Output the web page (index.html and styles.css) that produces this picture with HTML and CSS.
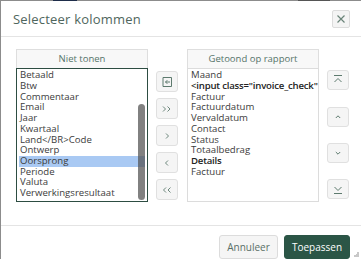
FILE: index.html
```html
<!DOCTYPE html>
<html>
<head>
<meta charset="utf-8">
<link rel="stylesheet" href="styles.css">
</head>
<body>
<div class="modal">
  <div class="header">
    <div class="title">Selecteer kolommen</div>
    <button class="close" aria-label="Sluiten">
      <svg width="10" height="10" viewBox="0 0 10 10"><path d="M1.5 1.5L8.5 8.5M8.5 1.5L1.5 8.5" stroke="#6a8479" stroke-width="1.2" fill="none"/></svg>
    </button>
  </div>
  <div class="content">
    <div class="panel">
      <div class="panel-head">Niet tonen</div>
      <div class="list focused">
        <div class="item">Betaald</div>
        <div class="item">Btw</div>
        <div class="item">Commentaar</div>
        <div class="item">Email</div>
        <div class="item">Jaar</div>
        <div class="item">Kwartaal</div>
        <div class="item">Land&lt;/BR&gt;Code</div>
        <div class="item">Ontwerp</div>
        <div class="item selected">Oorsprong</div>
        <div class="item">Periode</div>
        <div class="item">Valuta</div>
        <div class="item">Verwerkingsresultaat</div>
        <div class="thumb"></div>
      </div>
    </div>
    <div class="mid-buttons">
      <button class="btn-sq">
        <svg width="12" height="12" viewBox="0 0 12 12"><path d="M2 1.5H10.5V10.5H2Z" stroke="#5d7a6e" stroke-width="1" fill="none"/><path d="M9 6H4.5M6.3 4.2L4.5 6L6.3 7.8" stroke="#5d7a6e" stroke-width="1" fill="none"/></svg>
      </button>
      <button class="btn-sq">
        <svg width="12" height="12" viewBox="0 0 12 12"><path d="M2 3.5L4.5 6L2 8.5M6.5 3.5L9 6L6.5 8.5" stroke="#5d7a6e" stroke-width="0.9" fill="none"/></svg>
      </button>
      <button class="btn-sq">
        <svg width="12" height="12" viewBox="0 0 12 12"><path d="M5 3.5L7.5 6L5 8.5" stroke="#5d7a6e" stroke-width="0.9" fill="none"/></svg>
      </button>
      <button class="btn-sq">
        <svg width="12" height="12" viewBox="0 0 12 12"><path d="M7 3.5L4.5 6L7 8.5" stroke="#5d7a6e" stroke-width="0.9" fill="none"/></svg>
      </button>
      <button class="btn-sq">
        <svg width="12" height="12" viewBox="0 0 12 12"><path d="M5 3.5L2.5 6L5 8.5M9.5 3.5L7 6L9.5 8.5" stroke="#5d7a6e" stroke-width="0.9" fill="none"/></svg>
      </button>
    </div>
    <div class="panel">
      <div class="panel-head">Getoond op rapport</div>
      <div class="list">
        <div class="item">Maand</div>
        <div class="item bold">&lt;input class="invoice_check" type="checkbox"&gt;</div>
        <div class="item">Factuur</div>
        <div class="item">Factuurdatum</div>
        <div class="item">Vervaldatum</div>
        <div class="item">Contact</div>
        <div class="item">Status</div>
        <div class="item">Totaalbedrag</div>
        <div class="item bold">Details</div>
        <div class="item">Factuur</div>
      </div>
    </div>
    <div class="side-buttons">
      <button class="btn-sm">
        <svg width="12" height="12" viewBox="0 0 12 12"><path d="M2 1.5H10" stroke="#5d7a6e" stroke-width="1"/><path d="M2.5 8L6 4.5L9.5 8" stroke="#5d7a6e" stroke-width="1" fill="none"/></svg>
      </button>
      <button class="btn-sm">
        <svg width="12" height="12" viewBox="0 0 12 12"><path d="M3.8 7L6 4.8L8.2 7" stroke="#5d7a6e" stroke-width="1" fill="none"/></svg>
      </button>
      <button class="btn-sm">
        <svg width="12" height="12" viewBox="0 0 12 12"><path d="M3.8 5L6 7.2L8.2 5" stroke="#5d7a6e" stroke-width="1" fill="none"/></svg>
      </button>
      <button class="btn-sm">
        <svg width="12" height="12" viewBox="0 0 12 12"><path d="M2.5 4L6 7.5L9.5 4" stroke="#5d7a6e" stroke-width="1" fill="none"/><path d="M2 10.5H10" stroke="#5d7a6e" stroke-width="1"/></svg>
      </button>
    </div>
  </div>
  <div class="footer">
    <button class="btn-cancel">Annuleer</button>
    <button class="btn-apply">Toepassen</button>
  </div>
  <div class="resize"></div>
</div>
</body>
</html>
```
FILE: styles.css
```css
html {
  background: #8c8c8c linear-gradient(to right, #8c8c8c 53px, #1e2d4a 53px, #1e2d4a 77px, #8c8c8c 77px, #8c8c8c 298px, #555 298px, #555 330px, #8c8c8c 330px) no-repeat 0 0 / 100% 1px;
}
body {
  margin: 0;
  padding: 1px 0 0 1px;
  font-family: "Open Sans", "Liberation Sans", sans-serif;
  color: #333;
  overflow: hidden;
}
button {
  font-family: inherit;
  cursor: pointer;
  padding: 0;
}
.modal {
  position: relative;
  width: 360px;
  height: 258px;
  background: #fff;
  display: flex;
  flex-direction: column;
}
.header {
  height: 36px;
  border-bottom: 1px solid #e4e4e4;
  display: flex;
  align-items: center;
  justify-content: space-between;
  padding: 0 11px 0 12px;
}
.title {
  font-size: 13px;
  color: #4f665d;
  letter-spacing: 0.2px;
}
.close {
  width: 18px;
  height: 18px;
  background: #f4f4f4;
  border: 1px solid #dcdcdc;
  border-radius: 2px;
  display: flex;
  align-items: center;
  justify-content: center;
}
.content {
  display: flex;
  align-items: flex-start;
  padding: 12px 0 0 15px;
  height: 166px;
}
.panel {
  width: 132px;
  display: flex;
  flex-direction: column;
}
.panel-head {
  height: 19px;
  box-sizing: border-box;
  background: #f8f8f8;
  border: 1px solid #dedede;
  border-bottom: none;
  font-size: 9.5px;
  color: #56746a;
  text-align: center;
  line-height: 18px;
}
.list {
  position: relative;
  height: 134px;
  box-sizing: border-box;
  border: 1px solid #dcdcdc;
  padding: 1px 2px 0 2px;
  overflow: hidden;
  font-size: 9.6px;
  line-height: 10.7px;
  color: #3c3c3c;
}
.list.focused {
  border-color: #2d4d42;
}
.item {
  white-space: nowrap;
  padding-left: 1px;
}
.item.selected {
  background: #a9c9f3;
}
.item.bold {
  font-weight: 600;
  color: #222;
  letter-spacing: -0.2px;
}
.thumb {
  position: absolute;
  right: 2px;
  top: 35px;
  width: 7px;
  height: 96px;
  border-radius: 4px;
  background: rgba(80, 80, 80, 0.72);
}
.mid-buttons {
  display: flex;
  flex-direction: column;
  gap: 6px;
  margin: 22px 9px 0 8px;
}
.btn-sq {
  width: 22px;
  height: 21px;
  background: #f5f5f5;
  border: 1px solid #e0e0e0;
  border-radius: 3px;
  display: flex;
  align-items: center;
  justify-content: center;
}
.side-buttons {
  display: flex;
  flex-direction: column;
  gap: 16.3px;
  margin: 21px 0 0 8px;
}
.btn-sm {
  width: 22px;
  height: 20px;
  background: #f5f5f5;
  border: 1px solid #e0e0e0;
  border-radius: 3px;
  display: flex;
  align-items: center;
  justify-content: center;
}
.footer {
  margin-top: 13px;
  border-top: 1px solid #e4e4e4;
  display: flex;
  justify-content: flex-end;
  gap: 6px;
  padding: 9px 11px 0 0;
}
.btn-cancel {
  width: 59px;
  height: 24px;
  background: #f5f5f5;
  border: 1px solid #dcdcdc;
  border-radius: 3px;
  font-size: 10px;
  color: #5a6f67;
}
.btn-apply {
  width: 66px;
  height: 24px;
  background: #2b5546;
  border: 1px solid #2b5546;
  border-radius: 3px;
  font-size: 10px;
  color: #fff;
}
.resize {
  position: absolute;
  right: 2px;
  bottom: 2px;
  width: 6px;
  height: 6px;
  background: linear-gradient(135deg, transparent 50%, #c8c8c8 50%);
}
```
